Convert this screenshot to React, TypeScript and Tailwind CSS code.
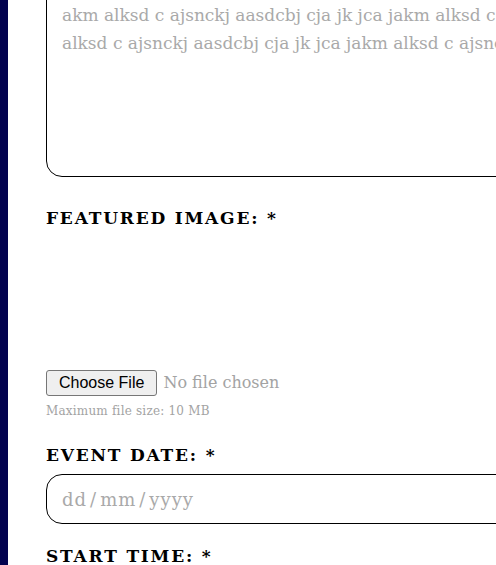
const serif = "font-[family-name:'DejaVu_Serif','Liberation_Serif',serif]";

const FieldLabel = ({ text }: { text: string }) => (
  <div
    className={`h-6 leading-6 text-[17px] font-bold tracking-[1.8px] text-black ${serif}`}
  >
    {text}: <span>*</span>
  </div>
);

export default function App() {
  return (
    <div className="flex h-[565px] w-[496px] overflow-hidden bg-white">
      {/* side rail */}
      <div className="w-2 shrink-0 bg-[#03034f]" />

      <div className="flex-1 pl-[38px] overflow-hidden">
        {/* description box, scrolled so its top is out of view */}
        <div className="-mt-5 h-[197px] w-[600px] rounded-[16px] border border-black px-[15px] pt-[20px] overflow-hidden">
          <p
            className={`whitespace-nowrap text-[17px] leading-[28px] text-[#a9a9a9] ${serif}`}
          >
            akm alksd c ajsnckj aasdcbj cja jk jca jakm alksd c ajsnckj
            <br />
            alksd c ajsnckj aasdcbj cja jk jca jakm alksd c ajsnckj aasdcbj
          </p>
        </div>

        <div className="mt-7 pt-px">
          <FieldLabel text="FEATURED IMAGE" />
        </div>

        {/* empty preview area */}
        <div className="h-[140px]" />

        <div className="flex items-center gap-[6px]">
          <button
            type="button"
            className="h-[26px] rounded-[3px] border border-[#767676] bg-[#efefef] px-[12px] text-[16px] text-black font-[family-name:'Liberation_Sans',sans-serif]"
          >
            Choose File
          </button>
          <span className={`text-[16px] text-[#a3a3a3] ${serif}`}>
            No file chosen
          </span>
        </div>
        <div
          className={`mt-[7px] h-4 leading-4 text-[12px] tracking-[0.2px] text-[#a3a3a3] ${serif}`}
        >
          Maximum file size: 10 MB
        </div>

        <div className="mt-6">
          <FieldLabel text="EVENT DATE" />
        </div>
        <div className="mt-[7px] flex h-[50px] w-[600px] items-center rounded-[16px] border border-black px-[15px]">
          <span
            className={`text-[18px] tracking-[1px] text-[#a9a9a9] ${serif}`}
          >
            dd<span className="mx-[3px]">/</span>mm
            <span className="mx-[3px]">/</span>yyyy
          </span>
        </div>

        <div className="mt-5">
          <FieldLabel text="START TIME" />
        </div>
      </div>
    </div>
  );
}
